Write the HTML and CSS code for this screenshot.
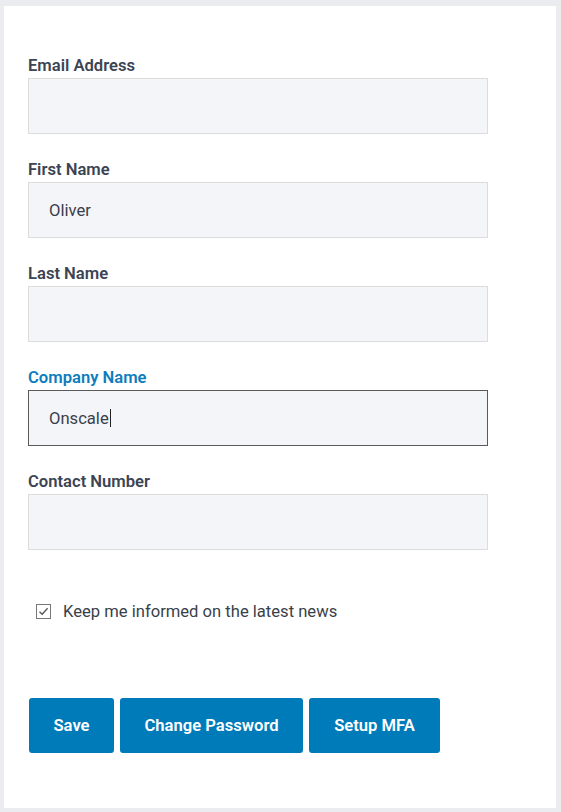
FILE: index.html
```html
<!DOCTYPE html>
<html>
<head>
<meta charset="utf-8">
<link rel="stylesheet" href="styles.css">
</head>
<body>
<div class="card">
  <form class="form">
    <div class="field">
      <label class="label">Email Address</label>
      <div class="input"></div>
    </div>
    <div class="field">
      <label class="label">First Name</label>
      <div class="input">Oliver</div>
    </div>
    <div class="field">
      <label class="label">Last Name</label>
      <div class="input"></div>
    </div>
    <div class="field">
      <label class="label label-focus">Company Name</label>
      <div class="input input-focus">Onscale<span class="caret"></span></div>
    </div>
    <div class="field">
      <label class="label">Contact Number</label>
      <div class="input"></div>
    </div>
    <div class="check-row">
      <span class="checkbox">
        <svg width="13" height="13" viewBox="0 0 13 13"><path d="M2.5 6.8 L5.2 9.3 L10.6 3.2" fill="none" stroke="#555" stroke-width="1.3"/></svg>
      </span>
      <span class="check-text">Keep me informed on the latest news</span>
    </div>
    <div class="buttons">
      <button type="button" class="btn btn-save">Save</button>
      <button type="button" class="btn btn-pw">Change Password</button>
      <button type="button" class="btn btn-mfa">Setup MFA</button>
    </div>
  </form>
</div>
</body>
</html>
```
FILE: styles.css
```css
html, body {
  margin: 0;
  padding: 0;
  background: #ebecf0;
}
body {
  padding: 6px 5px 4px 4px;
  font-family: "Roboto", "Liberation Sans", sans-serif;
  color: #333;
}
.card {
  background: #fff;
  width: 552px;
  height: 802px;
  box-sizing: border-box;
  padding: 48px 0 0 24px;
}
.form {
  display: flex;
  flex-direction: column;
}
.field {
  display: flex;
  flex-direction: column;
  margin-bottom: 24px;
}
.label {
  font-size: 16.6px;
  font-weight: 600;
  color: #3c4453;
  line-height: 24px;
  height: 24px;
}
.label-focus {
  color: #0d7dbd;
}
.input {
  width: 460px;
  height: 56px;
  box-sizing: border-box;
  background: #f4f5f9;
  border: 1px solid #dcdcdc;
  padding: 0 20px;
  display: flex;
  align-items: center;
  font-size: 16.6px;
  color: #3a3f4a;
}
.input-focus {
  border-color: #5a5a5a;
}
.caret {
  display: inline-block;
  width: 1px;
  height: 18px;
  background: #222;
  margin-left: 1px;
}
.check-row {
  display: flex;
  align-items: center;
  margin-top: 27px;
  padding-left: 8px;
  height: 20px;
}
.checkbox {
  width: 15px;
  height: 15px;
  box-sizing: border-box;
  border: 1px solid #777;
  display: flex;
  align-items: center;
  justify-content: center;
  margin-right: 12px;
}
.check-text {
  font-size: 16.6px;
  color: #3a3f4a;
}
.buttons {
  display: flex;
  gap: 6px;
  margin-top: 77px;
  padding-left: 1px;
}
.btn {
  height: 55px;
  border: none;
  border-radius: 3px;
  background: #007bba;
  color: #fff;
  font-family: "Roboto", "Liberation Sans", sans-serif;
  font-weight: 600;
  font-size: 16.6px;
  padding: 0;
}
.btn-save { width: 85px; }
.btn-pw { width: 183px; }
.btn-mfa { width: 131px; }
```
